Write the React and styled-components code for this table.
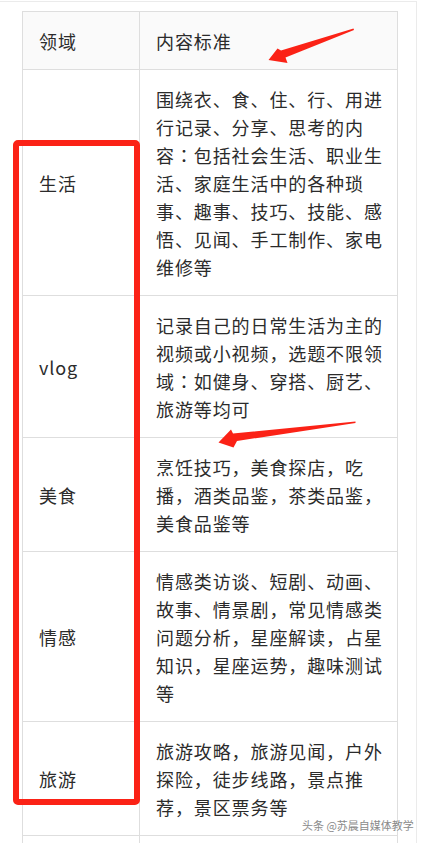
import React from "react";
import styled, { createGlobalStyle } from "styled-components";

const GlobalStyle = createGlobalStyle`
  html, body { margin: 0; padding: 0; background: #fff; }
  body { font-family: "Noto Sans CJK SC", "Noto Sans", sans-serif; }
`;

const Page = styled.div`
  position: relative;
  width: 422px;
  height: 843px;
  padding-top: 1px;
  box-sizing: border-box;
  overflow: hidden;
  background: #fff;
`;

const Frame = styled.div`
  width: 417px;
  height: 842px;
  box-sizing: border-box;
  border-top: 1px solid #ebebeb;
  border-right: 1px solid #ebebeb;
  padding: 9px 0 0 22px;
`;

const Table = styled.table`
  width: 375px;
  border-collapse: collapse;
  table-layout: fixed;
  color: #2b2b2b;
  font-size: 18px;
  line-height: 28px;
  letter-spacing: 0.9px;
`;

const Head = styled.th`
  background: #fafafa;
  border: 1px solid #dedede;
  font-weight: normal;
  text-align: left;
  padding: 14.5px 12px 14.5px 16px;
  vertical-align: middle;
`;

const Cell = styled.td`
  border: 1px solid #dedede;
  text-align: left;
  vertical-align: middle;
  padding: 14.5px 12px 14.5px 16px;
  height: ${(p) => (p.$filler ? "60px" : "auto")};
`;

const Colon = styled.span`
  font-family: "Noto Sans CJK JP", "Noto Sans CJK SC", sans-serif;
`;

const RedBox = styled.div`
  position: absolute;
  left: 13px;
  top: 140px;
  width: 127px;
  height: 665px;
  box-sizing: border-box;
  border: 6px solid #fb2216;
  border-radius: 5px;
`;

const Overlay = styled.svg`
  position: absolute;
  left: 0;
  top: 0;
  width: 422px;
  height: 843px;
  pointer-events: none;
`;

const Watermark = styled.div`
  position: absolute;
  left: 302px;
  top: 817px;
  font-size: 11px;
  line-height: 16px;
  color: #8a8a8a;
  white-space: nowrap;
  text-shadow: 0 0 2px #fff, 0 0 1px #fff;
`;

const withColon = (text) =>
  text.split("：").flatMap((part, i) =>
    i === 0 ? [part] : [<Colon key={i}>：</Colon>, part]
  );

const rows = [
  {
    k: "生活",
    v: "围绕衣、食、住、行、用进行记录、分享、思考的内容：包括社会生活、职业生活、家庭生活中的各种琐事、趣事、技巧、技能、感悟、见闻、手工制作、家电维修等",
  },
  {
    k: "vlog",
    v: "记录自己的日常生活为主的视频或小视频，选题不限领域：如健身、穿搭、厨艺、旅游等均可",
  },
  {
    k: "美食",
    v: "烹饪技巧，美食探店，吃播，酒类品鉴，茶类品鉴，美食品鉴等",
  },
  {
    k: "情感",
    v: "情感类访谈、短剧、动画、故事、情景剧，常见情感类问题分析，星座解读，占星知识，星座运势，趣味测试等",
  },
  {
    k: "旅游",
    v: "旅游攻略，旅游见闻，户外探险，徒步线路，景点推荐，景区票务等",
  },
];

export default function App() {
  return (
    <Page>
      <GlobalStyle />
      <Frame>
        <Table>
          <colgroup>
            <col style={{ width: 117 }} />
            <col style={{ width: 258 }} />
          </colgroup>
          <thead>
            <tr>
              <Head>领域</Head>
              <Head>内容标准</Head>
            </tr>
          </thead>
          <tbody>
            {rows.map((r) => (
              <tr key={r.k}>
                <Cell>{r.k}</Cell>
                <Cell>{withColon(r.v)}</Cell>
              </tr>
            ))}
            <tr>
              <Cell $filler />
              <Cell $filler />
            </tr>
          </tbody>
        </Table>
      </Frame>
      <RedBox />
      <Overlay viewBox="0 0 422 843">
        <polygon
          fill="#fb2216"
          points="268.5,60 277.5,48.5 281,50.5 353.5,28.5 354,30 285.5,57.5 287.5,63"
        />
        <polygon
          fill="#fb2216"
          points="218.5,442.5 231,429.5 233,433.5 355.5,421.5 355.5,423 237,441 233.5,447.5"
        />
      </Overlay>
      <Watermark>头条 @苏晨自媒体教学</Watermark>
    </Page>
  );
}
